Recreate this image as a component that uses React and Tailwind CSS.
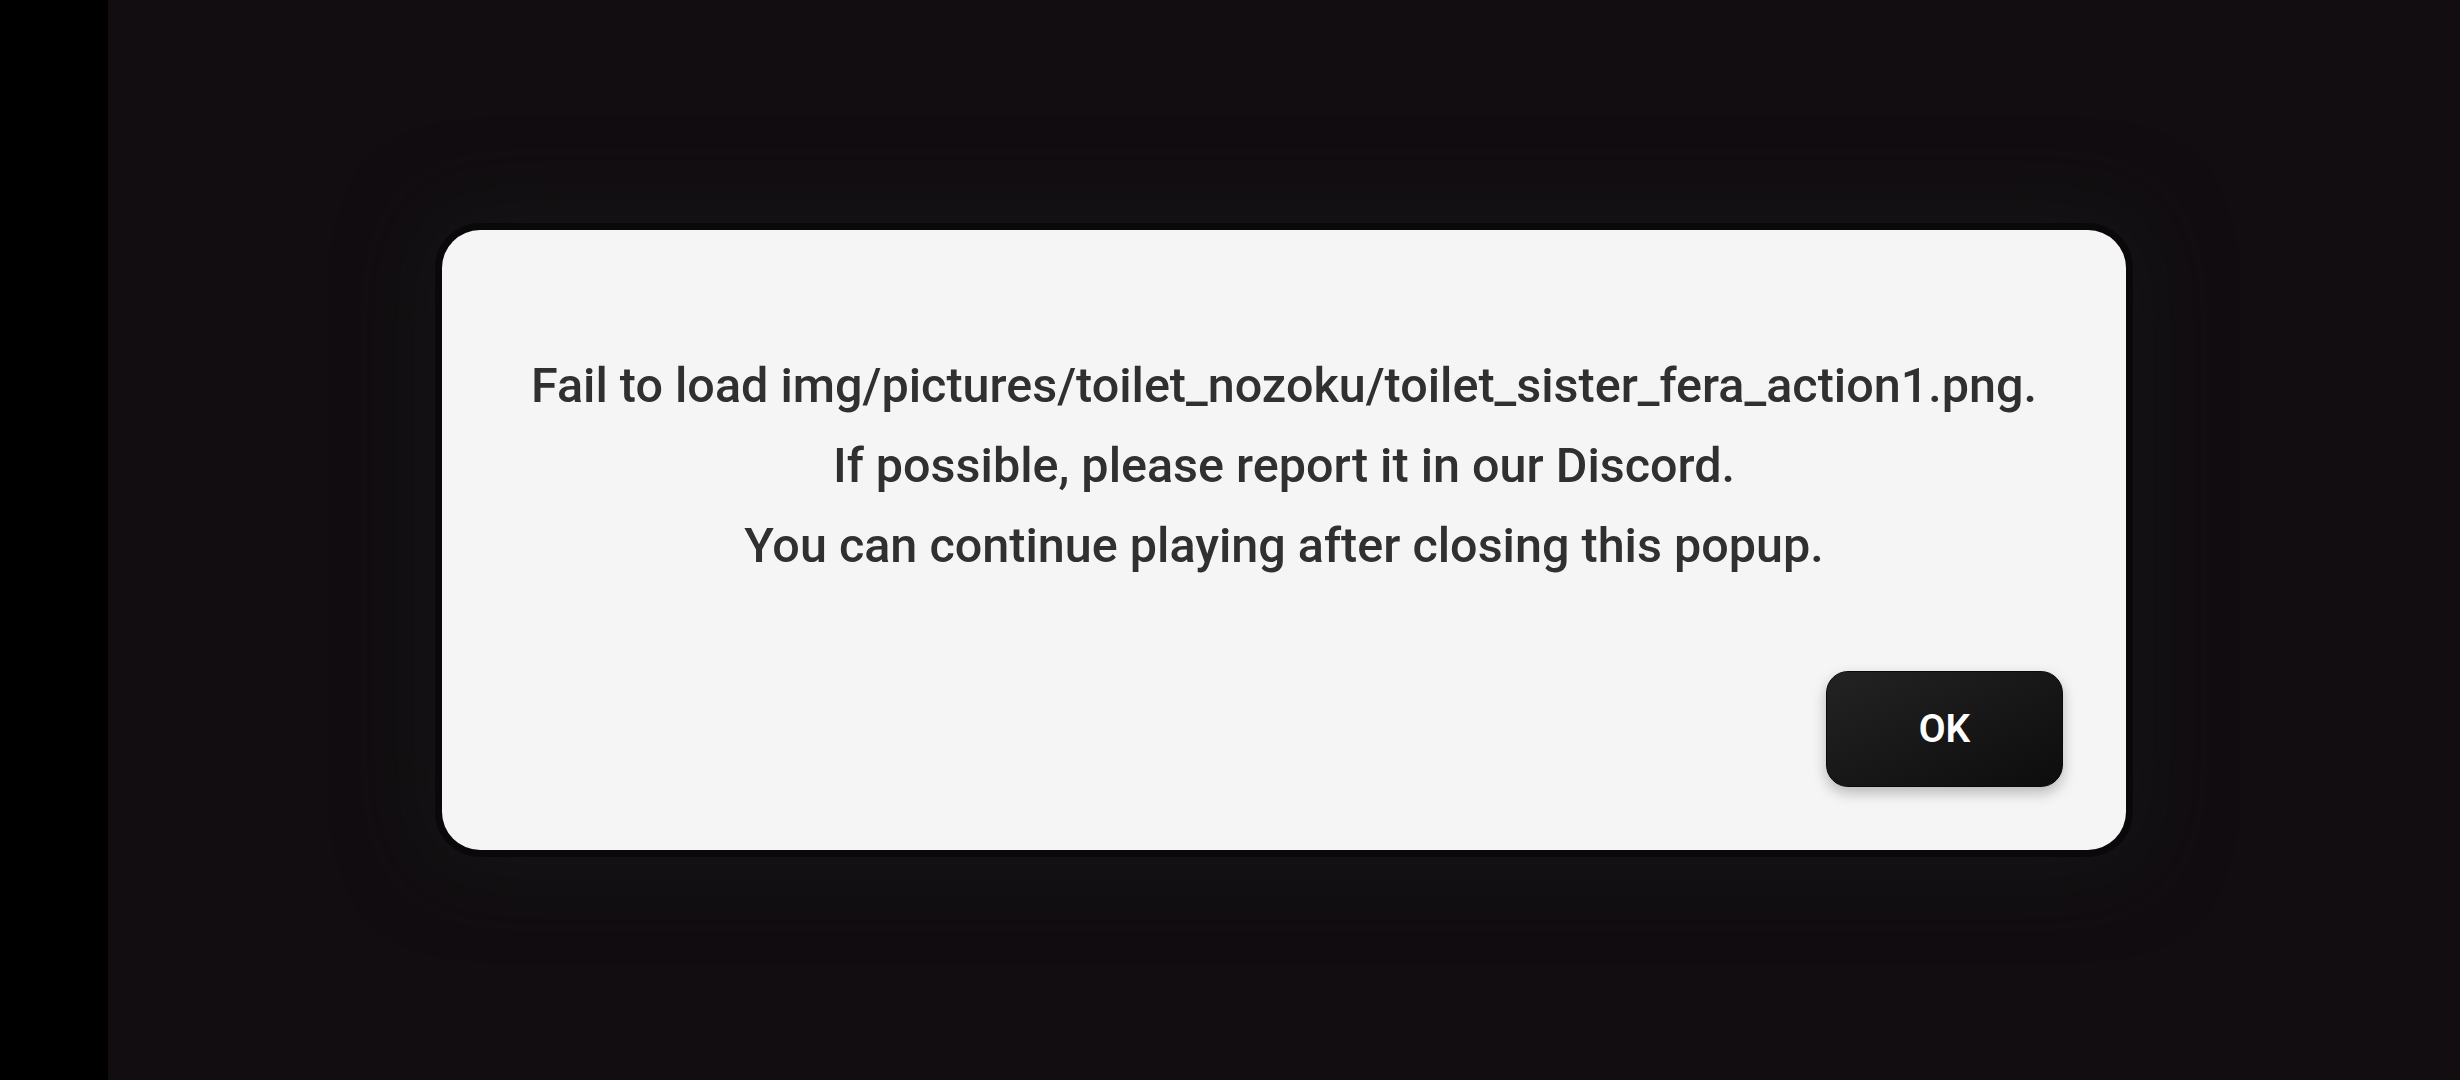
export default function App() {
  return (
    <div className="flex h-screen w-screen font-['Roboto',sans-serif]">
      <div className="w-[108px] shrink-0 bg-black" />
      <div className="flex flex-1 items-center justify-center bg-[#110d10]">
        <div className="flex h-[620px] w-[1684px] flex-col rounded-[38px] bg-[#f5f5f5] px-[63px] pb-[63px] pt-[116px] shadow-[0_0_0_7px_#0a080a,0_0_80px_20px_rgba(24,22,24,0.8)]">
          <div className="text-center text-[48.5px] font-medium leading-[80px] text-[#303030]">
            <p>Fail to load img/pictures/toilet_nozoku/toilet_sister_fera_action1.png.</p>
            <p>If possible, please report it in our Discord.</p>
            <p>You can continue playing after closing this popup.</p>
          </div>
          <div className="mt-auto flex justify-end">
            <button className="h-[116px] w-[237px] rounded-[22px] border border-[#0a0a0a] bg-gradient-to-br from-[#232323] to-[#0d0d0d] text-[39px] font-semibold text-white shadow-[0_6px_14px_rgba(0,0,0,0.25)]">
              OK
            </button>
          </div>
        </div>
      </div>
    </div>
  );
}
